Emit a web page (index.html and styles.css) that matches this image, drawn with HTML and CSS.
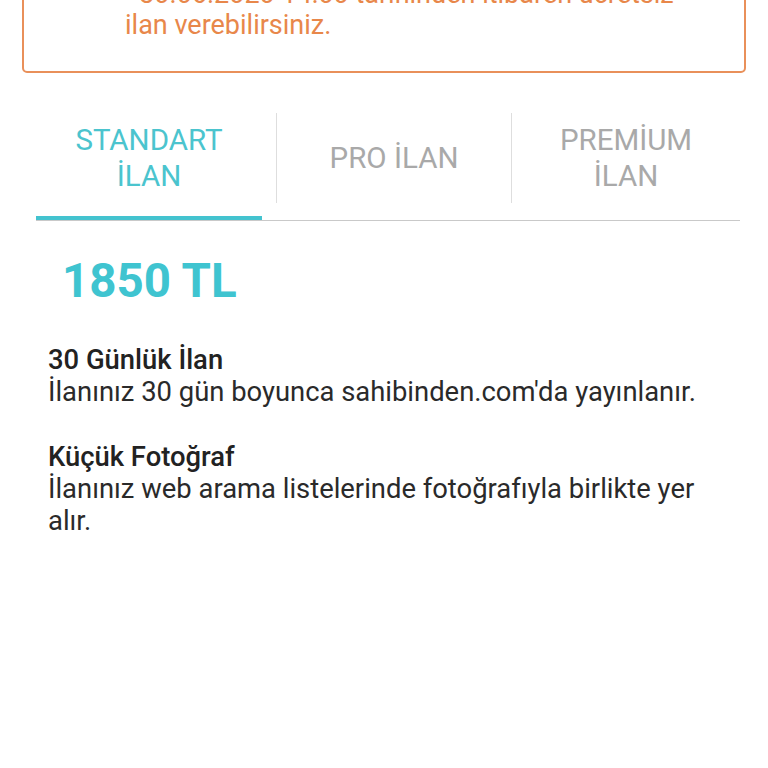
FILE: index.html
```html
<!DOCTYPE html>
<html lang="tr">
<head>
<meta charset="utf-8">
<link rel="stylesheet" href="styles.css">
</head>
<body>
<div class="page">
  <div class="notice">
    <p class="notice-text">- 30.06.2020 14:00 tarihinden itibaren ücretsiz<br>ilan verebilirsiniz.</p>
  </div>

  <div class="tabs">
    <div class="tab active">
      <div class="tab-label">STANDART<br>İLAN</div>
      <div class="tab-indicator"></div>
    </div>
    <div class="tab">
      <div class="tab-label divided">PRO İLAN</div>
      <div class="tab-indicator"></div>
    </div>
    <div class="tab">
      <div class="tab-label divided">PREMİUM<br>İLAN</div>
      <div class="tab-indicator"></div>
    </div>
  </div>

  <div class="price">1850 TL</div>

  <div class="features">
    <div class="feature">
      <div class="feature-title">30 Günlük İlan</div>
      <div class="feature-desc">İlanınız 30 gün boyunca sahibinden.com'da yayınlanır.</div>
    </div>
    <div class="feature">
      <div class="feature-title">Küçük Fotoğraf</div>
      <div class="feature-desc">İlanınız web arama listelerinde fotoğrafıyla birlikte yer alır.</div>
    </div>
  </div>
</div>
</body>
</html>
```

FILE: styles.css
```css
html, body {
  margin: 0;
  padding: 0;
  background: #ffffff;
}

body {
  font-family: Roboto, "Noto Sans", "Liberation Sans", sans-serif;
  overflow: hidden;
}

.page {
  width: 768px;
}

.notice {
  margin: -43px 22px 0 22px;
  border: 2px solid #e9905a;
  border-radius: 5px;
  padding: 20px 20px 31px 101px;
}

.notice-text {
  margin: 0;
  font-size: 27px;
  line-height: 30.5px;
  color: #e8874a;
  white-space: nowrap;
}

.tabs {
  display: grid;
  grid-template-columns: 240px 235px 1fr;
  margin: 40px 28px 0 36px;
  border-bottom: 1px solid #c9c9c9;
}

.tab {
  display: flex;
  flex-direction: column;
}

.tab-label {
  height: 90px;
  display: flex;
  align-items: center;
  justify-content: center;
  text-align: center;
  font-size: 29.5px;
  line-height: 36px;
  color: #a9a9a9;
}

.tab-label.divided {
  border-left: 1px solid #dedede;
}

.tab.active .tab-label {
  color: #4bc4ce;
  padding-right: 14px;
}

.tab-indicator {
  height: 4px;
  margin-top: 13px;
}

.tab.active .tab-indicator {
  background: #43c3cf;
  margin-right: 14px;
}

.price {
  margin: 34px 0 0 62px;
  font-size: 47.5px;
  line-height: 52px;
  font-weight: 700;
  color: #3fc4d0;
}

.features {
  margin: 37px 48px 0 48px;
  display: flex;
  flex-direction: column;
  gap: 33px;
}

.feature-title {
  font-size: 27.4px;
  line-height: 32px;
  font-weight: 500;
  color: #222222;
}

.feature-desc {
  font-size: 27.4px;
  line-height: 32px;
  color: #2a2a2a;
}
```
